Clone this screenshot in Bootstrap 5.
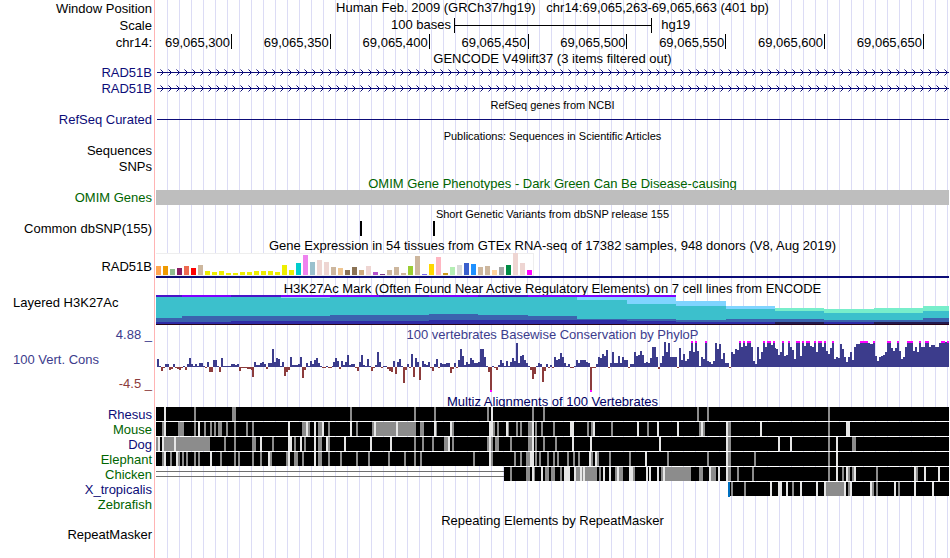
<!DOCTYPE html>
<html lang="en">
<head>
<meta charset="utf-8">
<meta name="viewport" content="width=device-width, initial-scale=1">
<title>Genome tracks – chr14:69,065,263-69,065,663</title>
<link href="https://cdn.jsdelivr.net/npm/bootstrap@5.3.0/dist/css/bootstrap.min.css" rel="stylesheet">
<style>
:root { --label-w: 156px; --navy: #0c0c78; --green: #006400; --cons: #3c3c8c; --neg: #8c3c3c; }
body { font: 13px/16px "Liberation Sans", Arial, sans-serif; color: #000; background: #fff; }
.browser {
  padding-right: 1px;
  background:
    linear-gradient(#ffb4b4, #ffb4b4) 154px 0 / 1px 100% no-repeat,
    repeating-linear-gradient(to right, transparent 0 11px, #dcdcf5 11px 12px) 156px 0 no-repeat;
}
.track-label { flex: 0 0 var(--label-w); padding-right: 4px; text-align: right; white-space: nowrap; }
.track-label.side { text-align: left; padding-left: 13px; }
.h16 > .track-label, .h18 > .track-label, .h25 > .track-label { padding-top: 2px; }
.track-data { flex: 1 1 0; min-width: 0; }
.track-title { margin-left: var(--label-w); text-align: center; white-space: nowrap; }
.minor { font-size: 11px; }
.h14 { height: 14px; } .h15 { height: 15px; } .h16 { height: 16px; } .h17 { height: 17px; } .h18 { height: 18px; }
.h25 { height: 25px; } .h30 { height: 30px; } .h67 { height: 67px; }
.drop-1 { padding-top: 1px; } .drop-2 { padding-top: 2px; } .drop-4 { padding-top: 4px; }
.c-navy { color: var(--navy); } .c-green { color: var(--green); } .c-cons { color: var(--cons); } .c-neg { color: var(--neg); }
.c-multiz { color: #000064; }
.plot { display: block; width: 100%; shape-rendering: crispEdges; }
.tick { flex: 0 0 12.465%; border-right: 1px solid #000; padding-right: 1px; text-align: right; height: 15px; line-height: 18px; }
.tick:first-child { flex-basis: 9.584%; }
.scale-from { flex: 0 0 37.58%; text-align: right; padding-right: 3px; }
.scale-bar { flex: 0 0 25%; height: 15px; border: solid #000; border-width: 0 1px; background: linear-gradient(#000, #000) 0 7px / 100% 1px no-repeat; }
.scale-to { padding-left: 9px; }
.band { background: #bebebe; }
.side-name { text-align: left; padding-left: 13px; }
</style>
</head>
<body>
<main class="browser min-vh-100 overflow-hidden">
  <div class="d-flex h16 align-items-center">
    <div class="track-label">Window Position</div>
    <div class="track-data text-center text-nowrap">Human Feb. 2009 (GRCh37/hg19) &nbsp; chr14:69,065,263-69,065,663 (401 bp)</div>
  </div>
  <div class="d-flex h18 align-items-center">
    <div class="track-label">Scale</div>
    <div class="track-data d-flex align-items-center">
      <div class="scale-from">100 bases</div><div class="scale-bar"></div><div class="scale-to">hg19</div>
    </div>
  </div>
  <div class="d-flex h16 align-items-center">
    <div class="track-label">chr14:</div>
    <div class="track-data d-flex h16">
      <div class="tick">69,065,300</div><div class="tick">69,065,350</div><div class="tick">69,065,400</div><div class="tick">69,065,450</div><div class="tick">69,065,500</div><div class="tick">69,065,550</div><div class="tick">69,065,600</div><div class="tick">69,065,650</div>
    </div>
  </div>

  <div class="track-title h14 drop-1">GENCODE V49lift37 (3 items filtered out)</div>
  <div class="d-flex h16 align-items-center c-navy">
    <div class="track-label">RAD51B</div>
    <div class="track-data"><svg class="plot gene h16" viewBox="0 0 793 16" preserveAspectRatio="none" role="img" aria-label="RAD51B transcript"></svg></div>
  </div>
  <div class="d-flex h16 align-items-center c-navy">
    <div class="track-label">RAD51B</div>
    <div class="track-data"><svg class="plot gene h16" viewBox="0 0 793 16" preserveAspectRatio="none" role="img" aria-label="RAD51B transcript"></svg></div>
  </div>

  <div class="track-title minor h16 drop-1">RefSeq genes from NCBI</div>
  <div class="d-flex h15 align-items-center c-navy">
    <div class="track-label">RefSeq Curated</div>
    <div class="track-data"><svg class="plot h15" viewBox="0 0 793 15" preserveAspectRatio="none" role="img" aria-label="RefSeq intron"><rect x="1" y="7" width="792" height="1" fill="#0c0c78"/></svg></div>
  </div>

  <div class="track-title minor h17 d-flex align-items-center justify-content-center">Publications: Sequences in Scientific Articles</div>
  <div class="d-flex h14 align-items-center"><div class="track-label">Sequences</div></div>
  <div class="d-flex h16 align-items-center"><div class="track-label">SNPs</div></div>

  <div class="track-title h16 d-flex align-items-center justify-content-center drop-4 c-green">OMIM Gene Phenotypes - Dark Green Can Be Disease-causing</div>
  <div class="d-flex h15 align-items-center c-green">
    <div class="track-label">OMIM Genes</div>
    <div class="track-data band h15"></div>
  </div>

  <div class="track-title minor h16 d-flex align-items-center justify-content-center drop-2">Short Genetic Variants from dbSNP release 155</div>
  <div class="d-flex h15 align-items-center">
    <div class="track-label">Common dbSNP(155)</div>
    <div class="track-data"><svg class="plot h15" viewBox="0 0 793 15" preserveAspectRatio="none" role="img" aria-label="Two variants"><path d="M204 0h2v15h-2zM277 0h2v15h-2z"/></svg></div>
  </div>

  <div class="track-title h17 d-flex align-items-center justify-content-center drop-2">Gene Expression in 54 tissues from GTEx RNA-seq of 17382 samples, 948 donors (V8, Aug 2019)</div>
  <div class="d-flex h25 align-items-center">
    <div class="track-label">RAD51B</div>
    <div class="track-data"><svg id="gtex" class="plot h25" viewBox="0 0 793 25" preserveAspectRatio="none" role="img" aria-label="Expression by tissue"></svg></div>
  </div>

  <div class="track-title h17 d-flex align-items-center justify-content-center drop-4">H3K27Ac Mark (Often Found Near Active Regulatory Elements) on 7 cell lines from ENCODE</div>
  <div class="d-flex h30 align-items-start">
    <div class="track-label side">Layered H3K27Ac</div>
    <div class="track-data"><svg id="h3k" class="plot h30" viewBox="0 0 793 30" preserveAspectRatio="none" role="img" aria-label="H3K27Ac signal"></svg></div>
  </div>

  <div class="d-flex h67 c-cons">
    <div class="track-label drop-2 d-flex flex-column justify-content-between">
      <div>4.88 _</div>
      <div class="side-name">100 Vert. Cons</div>
      <div class="c-neg">-4.5 _</div>
    </div>
    <div class="track-data">
      <div class="h16 text-nowrap d-flex align-items-center justify-content-center drop-4">100 vertebrates Basewise Conservation by PhyloP</div>
      <svg id="phylop" class="plot" viewBox="0 0 793 51" height="51" preserveAspectRatio="none" role="img" aria-label="PhyloP conservation scores"></svg>
    </div>
  </div>

  <div class="track-title h15 d-flex align-items-center justify-content-center drop-4 c-multiz">Multiz Alignments of 100 Vertebrates</div>
  <div id="multiz"></div>

  <div class="track-title h16 d-flex align-items-center justify-content-center drop-2">Repeating Elements by RepeatMasker</div>
  <div class="d-flex h14 align-items-center"><div class="track-label">RepeatMasker</div></div>
</main>

<script src="https://cdn.jsdelivr.net/npm/bootstrap@5.3.0/dist/js/bootstrap.bundle.min.js"></script>
<script>
// All data x positions share one axis whose left edge is ORIGIN.
const ORIGIN = 156;
const rect = (x, y, w, h, fill) => `<rect x="${x}" y="${y}" width="${w}" height="${h}" fill="${fill}"/>`;

// Transcript: intron line with strand arrows
let heads = '', tails = '';
for (let x = 4; x < 790; x += 8) {
  heads += `M${x + 1} 6h1v1h-1zM${x + 2} 7h1v3h-1zM${x + 1} 10h1v1h-1z`;
  tails += `M${x} 5h1v1h-1zM${x} 11h1v1h-1z`;
}
document.querySelectorAll('.gene').forEach(s => {
  s.innerHTML = rect(1, 8, 792, 1, '#0c0c78') + `<path d="${heads}" fill="#0c0c78"/><path d="${tails}" fill="#8080b8"/>`;
});

// GTEx: height + colour for each tissue
const tissues = `9ffa54f 9ee9a00 68fbc8f 78b1c62 9ee6a50 7ff0000 10cdb79e 4eeee00 3eeee00 4eeee00 2eeee00 2eeee00 3eeee00 3eeee00 4eeee00 4eeee00 4eeee00 3eeee00 10eeee00 5eeee00 1200cdcd 20ee82ee 139ac0cd 15eed5d2 13eed5d2 8cdb79e 7eec591 58b7355 88b7355 5cdaa7d 9eed5d2 3b452cd 17a378b 5cdb79e 8cdb79e 2cdb79e 99acd32 19cdb79e 17a67ee 11ffd700 18ffb6c1 2cd9b1d 8b4eeb4 10d9d9d9 123a5fcd 111e90ff 8cdb79e 9cdb79e 5ffd39b 8a6a6a6 10008b45 22eed5d2 12eed5d2 5ff00ff`.split(' ');
document.getElementById('gtex').innerHTML =
  rect(0, 0, 378, 23, '#eee') + rect(0, 1, 377, 21, '#fff') + rect(0, 23, 793, 2, '#0c0c78') +
  tissues.map((t, i) => { const h = +t.slice(0, -6); return rect(i * 7, 22 - h, 5, h, '#' + t.slice(-6)); }).join('');

// H3K27Ac: [from, to, [[top, colour], ...]] with layers painted downwards
const P = '#8000ff', D = '#4a14c8', L = '#80d4ff', T = '#3cc0cc', G = '#78eecb', B = '#3b63ae', I = '#2f2ba6', K = '#241a50';
const layers = [
  [156, 182, [[0, D], [2, T], [23, B], [27, I]]], [182, 231, [[0, P], [2, T], [21, B], [27, I]]],
  [231, 281, [[0, D], [2, T], [21, B], [26, I]]], [281, 330, [[0, P], [2, '#8cdcf0'], [3, T], [21, B], [26, I]]],
  [330, 379, [[0, P], [2, T], [20, B], [26, I]]], [379, 429, [[0, D], [2, T], [20, B], [26, I]]],
  [429, 478, [[0, P], [2, T], [19, B], [25, I]]], [478, 528, [[0, D], [2, T], [20, B], [25, I]]],
  [528, 577, [[0, P], [2, T], [21, B], [25, I]]], [577, 627, [[0, P], [2, L], [5, T], [24, B], [25, I]]],
  [627, 676, [[0, P], [2, L], [9, T], [24, B], [26, I]]], [676, 726, [[6, L], [11, T], [25, B], [27, I]]],
  [726, 775, [[11, L], [14, T], [24, B], [27, I]]], [775, 824, [[13, G], [16, T], [24, B], [27, K]]],
  [824, 874, [[14, G], [18, T], [25, B], [27, I]]], [874, 923, [[13, G], [18, T], [25, B], [27, K]]],
  [923, 949, [[11, G], [16, T], [23, B], [27, K]]]];
document.getElementById('h3k').innerHTML = layers.map(([a, b, l]) =>
  l.map(([y, c]) => rect(a - ORIGIN, y, b - a, 29 - y, c)).join('')).join('') + rect(0, 29, 793, 1, '#2a0418');

// PhyloP: runs of per-base scores, in pixels above or below zero
const runs = [
 [157, '8 1 -4 -1 3 3 -3 -2 3 -1 -2 -3 -1 1 -3 3 9 3 1 3 1 4 4 1 -1 5 -5 -5 7 7 1 -5 9 1 1 1 1 3 3 2 3 -4 -1 -1 -1 -2 -2 -3'],
 [252, '-10 5 2 2 4 5 3 -2 4 4 18 5 9 8 1 5 -9 -5 -3 10 2 2 2 3 10 -11 -3 4 1 6 3 7 9 4 1 -1 -1 1 -1 -1 1'],
 [333, '5 9 6 -2 6 2 5 12 2 3 3 -1 -4 5 12 2 1 8 1 -4 -1 2 15 5 -1 1 1 -2 -4 -5 6 -7 5 8 1 -16 -3 3 -1'],
 [411, '13 -10 9 5 -13'],
 [422, '6 3 2 5 -1 -4 3 8 -1 4 3 3 4 4 -6 -2 4 -1 7 18 11 2 5 3 9 7 4 4 5 18 18 10 1 -5 -25 1 -1 -3 2 7 4 1 6 1 5 9 6 24 4 11 12 7 4 1 -3 -12 -7 1 4 3 -15 -4 3 -1 2 -1 10 7 8 14 10 4 1 3 -1 -1 1 7 4 7 7 7 5 4 -25 -1 -1 3 10 9 13 11 17 -1 4 15 4 4 11 4 10 7 7 -1 3 3 15 11 12 16 12 4 5 4 9 20 20 10 -2 4 11 25 15 24'],
 [670, '10'],
 [671, '10 10 10 -1 19 7 13 6 8 16 26 15 26 16 1 10 8 26 6 5 3 6 24 18 23 8 14 4 4 -1 15 13 18 17 26 20 26 21 26 26 20 6 3 20 8 15 26 20 26 26 22 26'],
 [774, '19 18 12 15 26 11 12 26 20 17 8 26 26 11 26 21 26 26 21 20 26 15 26 26 20 26 16 13 19 26 8 10 9 23 18 10 5 10 15 7 20 23 23 26 26 26 26 24 23'],
 [872, '23'],
 [873, '26 11 6 10 11 12 15 26 26 19 16 19 26 16 8 10 20 26 26 26 16 20 15 26 20 20 26 26 20 22 22 20 20 24 26 26 25 26']];
document.getElementById('phylop').innerHTML = runs.map(([x0, s]) => s.split(' ').map((v, i) => {
  const x = x0 - ORIGIN + 2 * i, h = +v;
  if (h < 0) return rect(x, 26, 2, -h, '#8c3c3c') + (h === -25 ? rect(x, 49, 2, 2, '#f0f') : '');
  return rect(x, 26 - h, 2, h, '#3c3c8c') + (h === 26 ? rect(x, 0, 2, 2, '#f0f') : '');
}).join('')).join('');

// Multiz: g = grey, l = light, then start and optional :width (default 2)
const species = [
 ['Rhesus', 'navy', 156, 'l164 g194 g232:4 g350 g414 g434 g487 l491 g532 g543 g697 g707 g828'],
 ['Mouse', 'green', 156, 'g162 l164 g178:6 g194 l198 g204 g210 g214 g218:4 g226 g234 g246 g252 l288 g302:4 l306 g308 l314 g318:4 l322 g328 l350 g356 g372:44 l374 l396 g420:4 l434 g436:1 l450 g452 l489:4 g493 g497 l506 g508:1 g516 g520 g528:4 l532 g535 g541 g553 l570:4 g587 g591 l593 g611 l637 g647 l657 l677 g699 l701 g703 l726 g728:3 l760 g828 l846:4'],
 ['Dog', 'navy', 156, 'g156 l158 l162 g164:46 l174 g224 g234 g252:4 l260 g272 l288:4 g294 l300 g304 l314 g318:4 l326 g328 l344 l370 l390 g414 g422 g432 g444:4 l448 g452 g487 l489 g491 g495:4 g510 g528:4 l532 g535 g543 g555 l572 l590 l659 l726 g728:3 l778 l790 g828 l836 g852:4'],
 ['Elephant', 'green', 156, 'g162 l164 g170 l176 g178 g182 g186 g194 g198 l210 g220 g234 g238 g252 g260 l268 g270 g286 l288 g294:4 g302 l314 g318:4 g328 g340 g356 g368 g388 g404 g414 g420 g473 l489 g491 g514 g520 g526:4 l530:4 g535 g539 g547 g553 g557 g567 g573 g578 l589 g591 l595 g597 g609 g629 l645 g667 g707 l726 g728:3 g754 g828 l836'],
 ['Chicken', 'green', 504, 'g510 g526:4 l532 g534:1 l541 g545:4 g551:4 g560 l564:6 l574 g576:4 l580 g582:1 l583 g585:12 g599 l603 l609 g615 l617 g619:4 l629:4 g633 l646 l649 l657 g661 l663 g665:26 g699:4 l709 g711:5 l718 l726 g728:3 g737 g752 g828 l836 g842 l846 g848 g852 l854 g876 l914 g916 l924 l938'],
 ['X_tropicalis', 'navy', 730, 'g731 g744 l770 l778:4 l786 g792 l800 l816 l824 g826:18 l844 g848 l850 l870 g872 g876 l894 g898 l914 l932'],
 ['Zebrafish', 'green', null, '']];
document.getElementById('multiz').innerHTML = species.map(([name, tone, start, marks]) => {
  let g = '';
  if (start !== null) {
    g += rect(start - ORIGIN, 0, 949 - start, 14, '#000');
    g += marks.split(' ').map(m => {
      const [x, w] = m.slice(1).split(':');
      return rect(x - ORIGIN, 0, w || 2, 14, m[0] === 'g' ? '#8c8c8c' : '#e6e6e6');
    }).join('');
  }
  if (name === 'Chicken') g += rect(0, 4, 348, 1, '#707070') + rect(0, 9, 348, 1, '#707070');
  if (name === 'X_tropicalis') g += rect(572, 0, 2, 15, '#0070c0');
  return `<div class="d-flex h15 align-items-center c-${tone}"><div class="track-label">${name}</div>
    <div class="track-data"><svg class="plot h15" viewBox="0 0 793 15" preserveAspectRatio="none" role="img" aria-label="${name} alignment">${g}</svg></div></div>`;
}).join('');
</script>
</body>
</html>
